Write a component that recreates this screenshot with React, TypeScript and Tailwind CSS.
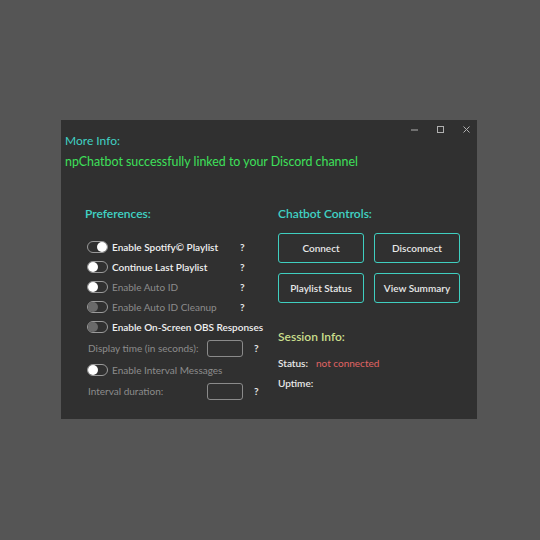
import React from "react";

const font = { fontFamily: "Lato, 'Noto Sans', sans-serif" };

function Toggle({ on, knob }: { on?: boolean; knob: "white" | "grey" }) {
  return (
    <div className="relative w-[21px] h-[12px] rounded-full border border-[#9a9a9a] shrink-0">
      <div
        className={
          "absolute top-[0px] w-[10px] h-[10px] rounded-full " +
          (knob === "white" ? "bg-white " : "bg-[#6a6a6a] ") +
          (on ? "right-[0px]" : "left-[0px]")
        }
      />
    </div>
  );
}

function ToggleRow({
  label,
  on,
  knob,
  dim,
  q = true,
}: {
  label: string;
  on?: boolean;
  knob: "white" | "grey";
  dim?: boolean;
  q?: boolean;
}) {
  return (
    <div className="flex items-center h-[20px] pl-[2px]">
      <Toggle on={on} knob={knob} />
      <span
        className={
          "ml-[4px] w-[128px] text-[10px] whitespace-nowrap " +
          (dim ? "text-[#8c8c8c] font-normal" : "text-[#f0f0f0] font-semibold")
        }
      >
        {label}
      </span>
      {q && <span className="text-[10px] font-bold text-[#e8e8e8]">?</span>}
    </div>
  );
}

function InputRow({ label }: { label: string }) {
  return (
    <div className="flex items-center h-[23px] pl-[3px]">
      <span className="w-[119px] text-[10px] text-[#8c8c8c] whitespace-nowrap">{label}</span>
      <div className="w-[36px] h-[17px] rounded-[3px] border border-[#8a8a8a]" />
      <span className="ml-[11px] text-[10px] font-bold text-[#e8e8e8]">?</span>
    </div>
  );
}

function Btn({ label }: { label: string }) {
  return (
    <div className="w-[86px] h-[30px] rounded-[3px] border border-[#3fcfc0] flex items-center justify-center text-[10px] font-semibold text-[#e8e8e8]">
      {label}
    </div>
  );
}

export default function App() {
  return (
    <div className="w-[540px] h-[540px] bg-[#555555] pt-[120px] pl-[61px]" style={font}>
      <div className="w-[416px] h-[299px] bg-[#303030] flex flex-col">
        <div className="h-[13px] flex justify-end items-end gap-[19px] pr-[7px]">
          <svg width="7" height="7" viewBox="0 0 7 7">
            <line x1="0" y1="4" x2="7" y2="4" stroke="#b0b0b0" strokeWidth="1" />
          </svg>
          <svg width="7" height="7" viewBox="0 0 7 7">
            <rect x="0.5" y="0.5" width="6" height="6" fill="none" stroke="#b0b0b0" strokeWidth="1" />
          </svg>
          <svg width="7" height="7" viewBox="0 0 7 7">
            <path d="M0.5 0.5 L6.5 6.5 M6.5 0.5 L0.5 6.5" stroke="#b0b0b0" strokeWidth="1" />
          </svg>
        </div>
        <div className="pl-[4px]">
          <div className="h-[16px] leading-[16px] text-[12px] text-[#40d2c4] font-normal">More Info:</div>
          <div className="mt-[5px] h-[16px] leading-[16px] text-[12.4px] text-[#3ee05a] font-normal">
            npChatbot successfully linked to your Discord channel
          </div>
        </div>
        <div className="flex mt-[36px] pl-[24px]">
          <div className="w-[193px] flex flex-col">
            <div className="h-[16px] leading-[16px] text-[12px] font-semibold text-[#40d2c4]">Preferences:</div>
            <div className="mt-[15px] flex flex-col">
              <ToggleRow label="Enable Spotify© Playlist" on knob="white" />
              <ToggleRow label="Continue Last Playlist" knob="white" />
              <ToggleRow label="Enable Auto ID" knob="white" dim />
              <ToggleRow label="Enable Auto ID Cleanup" knob="grey" dim />
              <ToggleRow label="Enable On-Screen OBS Responses" knob="grey" q={false} />
              <InputRow label="Display time (in seconds):" />
              <ToggleRow label="Enable Interval Messages" knob="white" dim q={false} />
              <InputRow label="Interval duration:" />
            </div>
          </div>
          <div className="flex flex-col">
            <div className="h-[16px] leading-[16px] text-[12px] font-semibold text-[#40d2c4]">Chatbot Controls:</div>
            <div className="mt-[11px] grid grid-cols-[86px_86px] gap-[10px]">
              <Btn label="Connect" />
              <Btn label="Disconnect" />
              <Btn label="Playlist Status" />
              <Btn label="View Summary" />
            </div>
            <div className="mt-[26px] h-[16px] leading-[16px] text-[12px] font-semibold text-[#c9de8c]">Session Info:</div>
            <div className="mt-[11px] flex items-center h-[14px] text-[10px] font-semibold">
              <span className="w-[38px] text-[#e8e8e8]">Status:</span>
              <span className="text-[#e06464] font-normal">not connected</span>
            </div>
            <div className="mt-[6px] h-[14px] flex items-center text-[10px] font-semibold text-[#e8e8e8]">Uptime:</div>
          </div>
        </div>
      </div>
    </div>
  );
}
